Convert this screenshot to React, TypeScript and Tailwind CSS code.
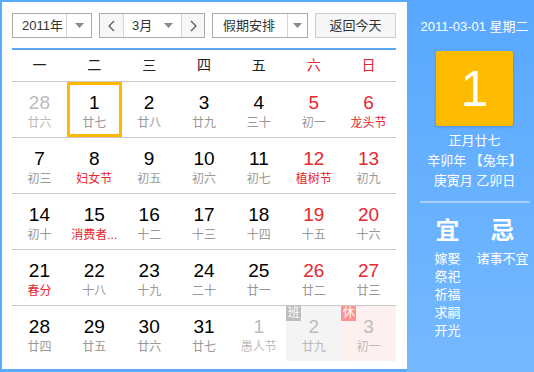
const RED = 'text-[#e8262d]';

type Cell = { d: number; l: string; other?: boolean; redNum?: boolean; redLunar?: boolean; sel?: boolean; tag?: 'ban' | 'xiu' };

const rows: Cell[][] = [
  [
    { d: 28, l: '廿六', other: true },
    { d: 1, l: '廿七', sel: true },
    { d: 2, l: '廿八' },
    { d: 3, l: '廿九' },
    { d: 4, l: '三十' },
    { d: 5, l: '初一', redNum: true },
    { d: 6, l: '龙头节', redNum: true, redLunar: true },
  ],
  [
    { d: 7, l: '初三' },
    { d: 8, l: '妇女节', redLunar: true },
    { d: 9, l: '初五' },
    { d: 10, l: '初六' },
    { d: 11, l: '初七' },
    { d: 12, l: '植树节', redNum: true, redLunar: true },
    { d: 13, l: '初九', redNum: true },
  ],
  [
    { d: 14, l: '初十' },
    { d: 15, l: '消费者...', redLunar: true },
    { d: 16, l: '十二' },
    { d: 17, l: '十三' },
    { d: 18, l: '十四' },
    { d: 19, l: '十五', redNum: true },
    { d: 20, l: '十六', redNum: true },
  ],
  [
    { d: 21, l: '春分', redLunar: true },
    { d: 22, l: '十八' },
    { d: 23, l: '十九' },
    { d: 24, l: '二十' },
    { d: 25, l: '廿一' },
    { d: 26, l: '廿二', redNum: true },
    { d: 27, l: '廿三', redNum: true },
  ],
  [
    { d: 28, l: '廿四' },
    { d: 29, l: '廿五' },
    { d: 30, l: '廿六' },
    { d: 31, l: '廿七' },
    { d: 1, l: '愚人节', other: true },
    { d: 2, l: '廿九', other: true, tag: 'ban' },
    { d: 3, l: '初一', other: true, tag: 'xiu' },
  ],
];

const weekdays = ['一', '二', '三', '四', '五', '六', '日'];

function Arrow() {
  return (
    <svg width="9" height="5" viewBox="0 0 9 5">
      <path d="M0 0h9L4.5 5z" fill="#8a8a8a" />
    </svg>
  );
}

function DayCell({ c }: { c: Cell }) {
  let bg = '';
  if (c.tag === 'ban') bg = 'bg-[#f4f4f4]';
  if (c.tag === 'xiu') bg = 'bg-[#fff0f0]';
  const numColor = c.other ? 'text-[#bbbbbb]' : c.redNum ? RED : 'text-black';
  const lunarColor = c.other ? 'text-[#bbbbbb]' : c.redLunar ? RED : 'text-[#999999]';
  return (
    <div className={`relative h-[55px] flex flex-col items-center pt-[9px] ${bg}`}>
      {c.sel && <div className="absolute inset-0 border-[3px] border-[#ffb800]" />}
      {c.tag && (
        <span
          className={`absolute left-0 top-0 w-[15px] h-[15px] text-[12px] leading-[15px] text-center text-white ${
            c.tag === 'ban' ? 'bg-[#bdbdbd]' : 'bg-[#ff9393]'
          }`}
        >
          {c.tag === 'ban' ? '班' : '休'}
        </span>
      )}
      <div className={`text-[19px] leading-[24px] ${numColor}`}>{c.d}</div>
      <div className={`text-[12px] leading-[16px] whitespace-nowrap ${lunarColor}`}>{c.l}</div>
    </div>
  );
}

export default function App() {
  return (
    <div
      className="w-[534px] h-[372px] flex bg-[#5aaaff] pl-[2px] pt-[2px] pb-[3px] overflow-hidden"
      style={{ fontFamily: '"Liberation Sans", "Noto Sans CJK SC", sans-serif' }}
    >
      <div className="w-[405px] h-full bg-white pl-[10px] pr-[11px] pt-[11px]">
        {/* toolbar */}
        <div className="flex h-[25px] text-[13px] text-[#333]">
          <div className="w-[80px] flex border border-[#aaaaaa]">
            <div className="flex-1 flex items-center pl-[9px]">2011年</div>
            <div className="w-[25px] border-l border-[#d4d4d4] flex items-center justify-center">
              <Arrow />
            </div>
          </div>
          <div className="ml-[7px] w-[106px] flex border border-[#aaaaaa]">
            <div className="w-[23px] bg-[#f7f7f7] flex items-center justify-center text-[#555]">
              <svg width="7" height="12" viewBox="0 0 7 12">
                <path d="M6 1L1 6l5 5" fill="none" stroke="#555" strokeWidth="1.2" />
              </svg>
            </div>
            <div className="flex-1 border-l border-r border-[#d4d4d4] flex items-center pl-[8px] pr-[8px] justify-between">
              <span>3月</span>
              <Arrow />
            </div>
            <div className="w-[22px] bg-[#f7f7f7] flex items-center justify-center">
              <svg width="7" height="12" viewBox="0 0 7 12">
                <path d="M1 1l5 5-5 5" fill="none" stroke="#555" strokeWidth="1.2" />
              </svg>
            </div>
          </div>
          <div className="ml-[7px] w-[96px] flex border border-[#aaaaaa]">
            <div className="flex-1 flex items-center pl-[10px]">假期安排</div>
            <div className="w-[20px] border-l border-[#d4d4d4] flex items-center justify-center">
              <Arrow />
            </div>
          </div>
          <div className="ml-[7px] flex-1 border border-[#cccccc] bg-[#f6f6f6] flex items-center justify-center">
            返回今天
          </div>
        </div>

        <div className="mt-[10px] h-[2px] bg-[#5aa8f5]" />

        <div className="grid grid-cols-7 h-[32px] items-center text-[14px] border-b border-[#c8c8c8]">
          {weekdays.map((w, i) => (
            <div key={w} className={`text-center ${i >= 5 ? RED : 'text-[#222]'}`}>
              {w}
            </div>
          ))}
        </div>

        {rows.map((r, ri) => (
          <div key={ri} className={`grid grid-cols-7 ${ri < 4 ? 'border-b border-[#c8c8c8]' : ''}`}>
            {r.map((c, ci) => (
              <DayCell key={ci} c={c} />
            ))}
          </div>
        ))}
      </div>

      <div className="flex-1 h-[372px] -mt-[2px] -mb-[3px] pl-[8px] bg-gradient-to-b from-[#58a8ff] to-[#75b9ff] text-white flex flex-col items-center">
        <div className="mt-[19px] text-[13px] leading-[16px]">2011-03-01 星期二</div>
        <div className="mt-[16px] w-[77px] h-[75px] rounded-[2px] bg-[#ffbb00] shadow-[0_1px_3px_rgba(0,0,0,0.2)] flex items-center justify-center text-[50px] leading-none">
          1
        </div>
        <div className="mt-[5px] text-[13px] leading-[20px] text-center">
          <div>正月廿七</div>
          <div>辛卯年 【兔年】</div>
          <div>庚寅月 乙卯日</div>
        </div>
        <div className="mt-[10px] w-[110px] h-[2px] bg-[#a6cfff]" />
        <div className="mt-[14px] w-[110px] flex">
          <div className="w-[56px] flex flex-col items-center">
            <div className="text-[24px] leading-[28px] font-semibold">宜</div>
            <div className="mt-[5px] text-[13px] leading-[18px] flex flex-col items-center">
              <span>嫁娶</span>
              <span>祭祀</span>
              <span>祈福</span>
              <span>求嗣</span>
              <span>开光</span>
            </div>
          </div>
          <div className="flex-1 flex flex-col items-center">
            <div className="text-[24px] leading-[28px] font-semibold">忌</div>
            <div className="mt-[5px] text-[13px] leading-[18px]">诸事不宜</div>
          </div>
        </div>
      </div>
    </div>
  );
}
